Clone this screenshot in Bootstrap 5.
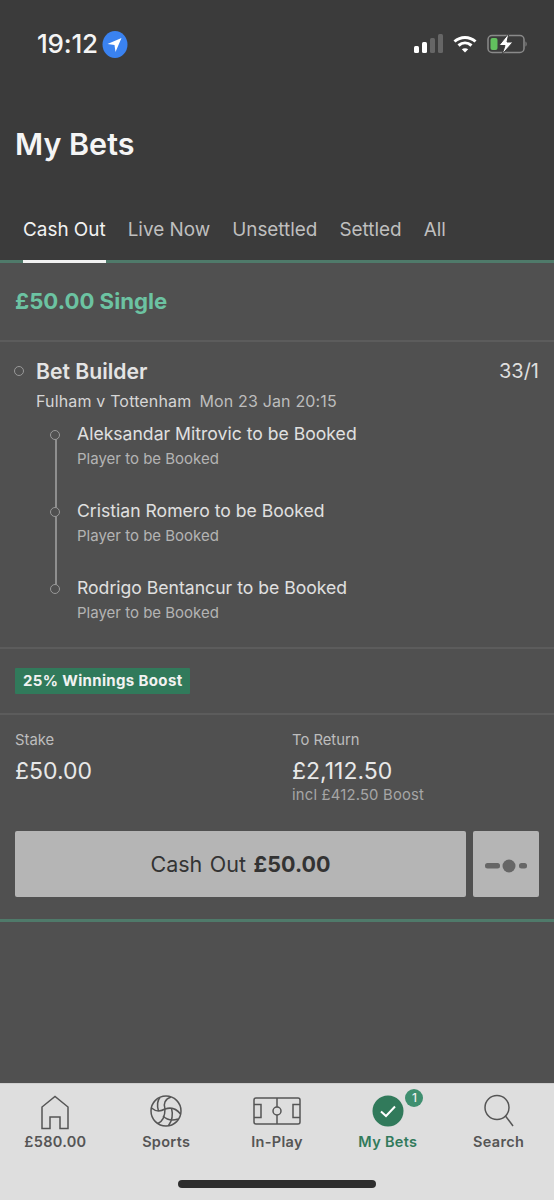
<!DOCTYPE html>
<html lang="en">
<head>
    <meta charset="UTF-8">
    <title>My Bets</title>
    <meta name="viewport" content="width=device-width, initial-scale=1">
    <link href="https://cdn.jsdelivr.net/npm/bootstrap@5.3.0/dist/css/bootstrap.min.css" rel="stylesheet">
    <style>
        html, body { height: 100%; }
        body { width: 554px; height: 1200px; overflow: hidden; background: #505050; font-family: Inter, "Liberation Sans", sans-serif; color: #e6e6e6; }
        .app-shell { height: 1200px; }
        .top-area { height: 260px; background: #3b3b3b; }
        .status-row { height: 90px; padding: 28px 27px 0 37px; }
        .clock { font-size: 26px; font-weight: 500; color: #f4f4f4; line-height: 32px; letter-spacing: -.2px; }
        .status-icons { height: 32px; gap: 10px; }
        .page-title { font-size: 30.5px; font-weight: 600; color: #f5f5f5; line-height: 38px; margin: 35px 0 0 15px; }
        .tab-row { margin: 37px 0 0 12px; }
        .tab-item { font-size: 18.9px; line-height: 24px; color: #bfbfbf; padding: 18px 11px; position: relative; }
        .tab-item.is-on { color: #f2f2f2; }
        .tab-item.is-on::after { content: ""; position: absolute; left: 11px; right: 11px; bottom: -3px; height: 3px; background: #f2f2f2; }
        .green-rule { height: 3px; background: #4f7a6a; }
        .bet-head { height: 79px; padding: 0 0 2px 15px; font-size: 22.2px; font-weight: 700; color: #6cc3a2; border-bottom: 2px solid #5c5c5c; }
        .bet-main { height: 307px; padding: 13px 15px 0 14px; border-bottom: 2px solid #5c5c5c; }
        .ring { width: 10px; height: 10px; border: 1.5px solid #999; border-radius: 50%; flex: none; }
        .builder-title { font-size: 21.2px; font-weight: 600; line-height: 32px; margin-left: 12px; color: #e4e4e4; }
        .odds-val { font-size: 20px; line-height: 32px; color: #dedede; }
        .match-line { font-size: 16px; line-height: 24px; margin: 2px 0 0 22px; color: #d6d6d6; letter-spacing: .16px; }
        .match-date { color: #bdbdbd; margin-left: 8px; }
        .leg-list { margin: 1px 0 0 36px; position: relative; }
        .leg-list::before { content: ""; position: absolute; left: 5px; top: 21px; height: 154px; width: 1.5px; background: #8f8f8f; }
        .leg-row { height: 77px; padding-top: 7px; gap: 17px; }
        .leg-row .ring { margin-top: 9px; position: relative; background: #505050; }
        .leg-name { font-size: 17.6px; line-height: 26px; color: #e0e0e0; }
        .leg-sub { font-size: 15px; line-height: 24px; color: #b4b4b4; }
        .boost-wrap { height: 66px; padding-left: 15px; border-bottom: 2px solid #5c5c5c; }
        .boost-tag { background: #317a5b; color: #f2f2f2; font-size: 15px; font-weight: 700; line-height: 26px; padding: 0 8px; border-radius: 1px; letter-spacing: .35px; }
        .money-wrap { padding: 14px 15px 0; height: 116px; }
        .money-col { width: 277px; }
        .money-label { font-size: 14.8px; line-height: 22px; color: #bdbdbd; }
        .money-val { font-size: 23px; line-height: 38px; margin-top: 1px; color: #e8e8e8; }
        .money-note { font-size: 14.8px; line-height: 18px; color: #a6a6a6; margin-top: -4px; letter-spacing: .2px; }
        .action-row { padding: 0 15px; gap: 7px; height: 66px; }
        .btn.cash-btn { flex: 1; background: #b5b5b5; border: 0; border-radius: 2px; color: #333; font-size: 21.5px; word-spacing: 1.5px; }
        .btn.slide-btn { width: 66px; padding: 0; background: #b5b5b5; border: 0; border-radius: 2px; }
        .lower-rule { margin-top: 22px; }
        .spacer-fill { flex: 1; }
        .tab-bar { height: 117px; background: #dedede; border-top: 1px solid #cfcfcf; position: relative; padding-top: 10px; }
        .tab-cell { width: 20%; color: #555; font-size: 14.5px; font-weight: 600; letter-spacing: .3px; position: relative; }
        .tab-cell svg { display: block; height: 36px; }
        .tab-cell span { line-height: 24px; }
        .tab-cell.is-on { color: #317a5b; }
        .count-pill { position: absolute; top: -5px; left: 73px; width: 18px; height: 18px; border-radius: 50%; background: #3f8f70; color: #eee; font-size: 12px; font-weight: 500; line-height: 18px; text-align: center; letter-spacing: 0; }
        .home-bar { position: absolute; left: 178px; bottom: 12px; width: 198px; height: 8px; border-radius: 4px; background: #2e2e2e; }
    </style>
</head>
<body>
<div class="app-shell d-flex flex-column">

    <!-- header -->
    <div class="top-area">
        <div class="status-row d-flex justify-content-between align-items-start">
            <div class="d-flex align-items-center gap-1">
                <span class="clock">19:12</span>
                <svg width="26" height="27" viewBox="0 0 26 27"><ellipse cx="13" cy="13.500" rx="12.500" ry="13.500" fill="#3a82f0"/><path d="M19.500 7 L5.500 13 L12.500 14 L13.500 21 Z" fill="#fff"/></svg>
            </div>
            <div class="status-icons d-flex align-items-center">
                <svg width="29" height="20" viewBox="0 0 29 20"><rect x="0" y="12" width="5" height="7" rx="1.5" fill="#fff"/><rect x="8" y="8" width="5" height="11" rx="1.500" fill="#fff"/><rect x="16" y="4" width="5" height="15" rx="1.500" fill="#666"/><rect x="24" y="0" width="5" height="19" rx="1.500" fill="#666"/></svg>
                <svg width="24" height="20" viewBox="0 0 24 20" fill="none" stroke="#fff" stroke-width="3"><path d="M1.500 7.500 C7.500 2 16.500 2 22.500 7.500"/><path d="M5.500 11.500 C9.500 8 14.500 8 18.500 11.500"/><path d="M12 18.500 L8.800 15.300 C10.500 13.800 13.500 13.800 15.200 15.300 Z" fill="#fff" stroke="none"/></svg>
                <svg width="40" height="22" viewBox="0 0 40 22"><rect x="1" y="2.500" width="36" height="17" rx="4" fill="none" stroke="#8a8a8a" stroke-width="1.500"/><rect x="3.500" y="5" width="7" height="12" rx="2" fill="#62c05e"/><path d="M38.500 8.500 v5 c1.500-.5 1.500-4.500 0-5z" fill="#8a8a8a"/><path d="M22 0 L12 12.500 H18 L15 21.500 L26 9 H20 Z" fill="#fff" stroke="#3b3b3b" stroke-width="1"/></svg>
            </div>
        </div>
        <div class="page-title">My Bets</div>
        <div class="tab-row d-flex">
            <div class="tab-item is-on">Cash Out</div>
            <div class="tab-item">Live Now</div>
            <div class="tab-item">Unsettled</div>
            <div class="tab-item">Settled</div>
            <div class="tab-item">All</div>
        </div>
    </div>
    <div class="green-rule"></div>

    <!-- bet card -->
    <div class="bet-head d-flex align-items-center">£50.00 Single</div>
    <div class="bet-main">
        <div class="d-flex align-items-center">
            <div class="ring"></div>
            <div class="builder-title flex-grow-1">Bet Builder</div>
            <div class="odds-val">33/1</div>
        </div>
        <div class="match-line">Fulham v Tottenham<span class="match-date">Mon 23 Jan 20:15</span></div>
        <div class="leg-list">
            <div class="leg-row d-flex">
                <div class="ring"></div>
                <div><div class="leg-name">Aleksandar Mitrovic to be Booked</div><div class="leg-sub">Player to be Booked</div></div>
            </div>
            <div class="leg-row d-flex">
                <div class="ring"></div>
                <div><div class="leg-name">Cristian Romero to be Booked</div><div class="leg-sub">Player to be Booked</div></div>
            </div>
            <div class="leg-row d-flex">
                <div class="ring"></div>
                <div><div class="leg-name">Rodrigo Bentancur to be Booked</div><div class="leg-sub">Player to be Booked</div></div>
            </div>
        </div>
    </div>
    <div class="boost-wrap d-flex align-items-center"><span class="boost-tag">25% Winnings Boost</span></div>
    <div class="money-wrap d-flex">
        <div class="money-col">
            <div class="money-label">Stake</div>
            <div class="money-val">£50.00</div>
        </div>
        <div>
            <div class="money-label">To Return</div>
            <div class="money-val">£2,112.50</div>
            <div class="money-note">incl £412.50 Boost</div>
        </div>
    </div>
    <div class="action-row d-flex">
        <button class="btn cash-btn">Cash Out <b>£50.00</b></button>
        <button class="btn slide-btn">
            <svg width="42" height="16" viewBox="0 0 42 16"><rect x="0" y="5" width="15" height="5.500" rx="2.500" fill="#666"/><circle cx="24" cy="8" r="6.500" fill="#666"/><rect x="34" y="5" width="8" height="5.500" rx="2.500" fill="#666"/></svg>
        </button>
    </div>
    <div class="green-rule lower-rule"></div>
    <div class="spacer-fill"></div>

    <!-- bottom tabs -->
    <div class="tab-bar d-flex align-items-start">
        <div class="tab-cell d-flex flex-column align-items-center">
            <svg width="30" height="36" viewBox="0 0 30 36" fill="none" stroke="#555" stroke-width="1.500"><path d="M2 34.500 V13 L15 2.500 L28 13 V34.500 H20 V23 H10 V34.500 Z"/></svg>
            <span>£580.00</span>
        </div>
        <div class="tab-cell d-flex flex-column align-items-center">
            <svg width="32" height="36" viewBox="0 0 32 36" fill="none" stroke="#555" stroke-width="1.500"><circle cx="16" cy="17" r="15"/><path d="M15 15 C13 10 15 5 21 3"/><path d="M15 15 C21 13 26 14 30.500 20"/><path d="M15 15 C15 22 13 27 8 29.500"/><path d="M15 15 C10 18 5 17 1.500 14"/><path d="M10 3.500 C7 7 7 12 8.500 17"/><path d="M21.500 14 C23 20 22 27 18.500 31.500"/><path d="M13 22 C17 26 22 27 28 25"/></svg>
            <span>Sports</span>
        </div>
        <div class="tab-cell d-flex flex-column align-items-center">
            <svg width="48" height="36" viewBox="0 0 48 36" fill="none" stroke="#555" stroke-width="1.500"><rect x="1" y="4" width="46" height="26" rx="2"/><path d="M24 4 V13 M24 21 V30"/><circle cx="24" cy="17" r="4"/><path d="M1 10.500 H8 V23.500 H1 M47 10.500 H40 V23.500 H47"/></svg>
            <span>In-Play</span>
        </div>
        <div class="tab-cell is-on d-flex flex-column align-items-center">
            <svg width="32" height="36" viewBox="0 0 32 36"><circle cx="16" cy="17" r="15.500" fill="#317a5b"/><path d="M9 17.500 L14 22 L23 12.500" fill="none" stroke="#fff" stroke-width="2"/></svg>
            <div class="count-pill">1</div>
            <span>My Bets</span>
        </div>
        <div class="tab-cell d-flex flex-column align-items-center">
            <svg width="30" height="36" viewBox="0 0 30 36" fill="none" stroke="#555" stroke-width="1.500"><circle cx="13" cy="13.500" r="12"/><path d="M21.500 22 L29 32"/></svg>
            <span>Search</span>
        </div>
        <div class="home-bar"></div>
    </div>
</div>
<script src="https://cdn.jsdelivr.net/npm/bootstrap@5.3.0/dist/js/bootstrap.bundle.min.js"></script>
</body>
</html>
